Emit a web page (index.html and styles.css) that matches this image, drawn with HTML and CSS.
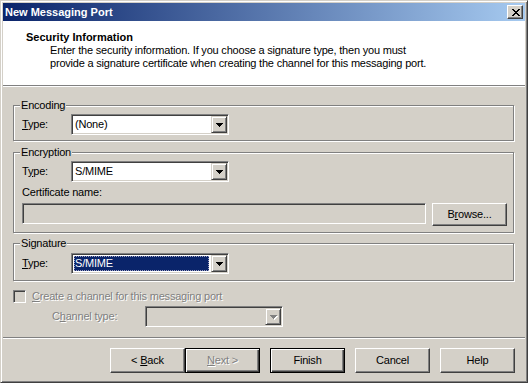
FILE: index.html
```html
<!DOCTYPE html>
<html lang="en">
<head>
    <meta charset="UTF-8">
    <title>New Messaging Port</title>
    <link rel="stylesheet" href="styles.css">
</head>
<body>
    <div class="window">
        <div class="titlebar">
            <span class="title">New Messaging Port</span>
            <span class="close-btn">
                <svg width="8" height="7" viewBox="0 0 8 7" shape-rendering="crispEdges"><path fill="#000" d="M0 0h2v1H0zM6 0h2v1H6zM1 1h2v1H1zM5 1h2v1H5zM2 2h4v1H2zM3 3h2v1H3zM2 4h4v1H2zM1 5h2v1H1zM5 5h2v1H5zM0 6h2v1H0zM6 6h2v1H6z"/></svg>
            </span>
        </div>

        <div class="header">
            <div class="header-title">Security Information</div>
            <div class="header-text">Enter the security information. If you choose a signature type, then you must<br>provide a signature certificate when creating the channel for this messaging port.</div>
        </div>

        <div class="page">
            <div class="group group-encoding">
                <span class="group-label">Encoding</span>
                <div class="field-row">
                    <span class="field-label"><u>T</u>ype:</span>
                    <div class="combo">
                        <span class="combo-value">(None)</span>
                        <span class="combo-btn"><svg width="7" height="4" viewBox="0 0 7 4" shape-rendering="crispEdges"><path fill="#000" d="M0 0h7v1H0zM1 1h5v1H1zM2 2h3v1H2zM3 3h1v1H3z"/></svg></span>
                    </div>
                </div>
            </div>

            <div class="group group-encryption">
                <span class="group-label">Encryption</span>
                <div class="field-row">
                    <span class="field-label">T<u>y</u>pe:</span>
                    <div class="combo">
                        <span class="combo-value">S/MIME</span>
                        <span class="combo-btn"><svg width="7" height="4" viewBox="0 0 7 4" shape-rendering="crispEdges"><path fill="#000" d="M0 0h7v1H0zM1 1h5v1H1zM2 2h3v1H2zM3 3h1v1H3z"/></svg></span>
                    </div>
                </div>
                <div class="cert-label">Certificate name:</div>
                <div class="cert-row">
                    <div class="textbox disabled"></div>
                    <button class="btn browse-btn">B<u>r</u>owse...</button>
                </div>
            </div>

            <div class="group group-signature">
                <span class="group-label">Signature</span>
                <div class="field-row">
                    <span class="field-label"><u>T</u>ype:</span>
                    <div class="combo">
                        <span class="combo-value selected">S/MIME</span>
                        <span class="combo-btn"><svg width="7" height="4" viewBox="0 0 7 4" shape-rendering="crispEdges"><path fill="#000" d="M0 0h7v1H0zM1 1h5v1H1zM2 2h3v1H2zM3 3h1v1H3z"/></svg></span>
                    </div>
                </div>
            </div>

            <div class="check-row">
                <span class="checkbox"></span>
                <span class="disabled-text"><u>C</u>reate a channel for this messaging port</span>
            </div>

            <div class="channel-row">
                <span class="channel-label disabled-text">C<u>h</u>annel type:</span>
                <div class="combo combo-disabled">
                    <span class="combo-value"></span>
                    <span class="combo-btn"><svg width="8" height="5" viewBox="0 0 8 5" shape-rendering="crispEdges"><path fill="#fff" d="M1 1h7v1H1zM2 2h5v1H2zM3 3h3v1H3zM4 4h1v1H4z"/><path fill="#808080" d="M0 0h7v1H0zM1 1h5v1H1zM2 2h3v1H2zM3 3h1v1H3z"/></svg></span>
                </div>
            </div>
        </div>

        <div class="footer">
            <button class="btn"><span>&lt; <u>B</u>ack</span></button>
            <button class="btn btn-default btn-next"><span class="disabled-text"><u>N</u>ext &gt;</span></button>
            <button class="btn btn-default btn-finish">Finish</button>
            <button class="btn btn-cancel">Cancel</button>
            <button class="btn">Help</button>
        </div>
    </div>
</body>
</html>
```

FILE: styles.css
```css
* {
    margin: 0;
    padding: 0;
    box-sizing: border-box;
}

body {
    font-family: "Liberation Sans", Arial, sans-serif;
    font-size: 11px;
    line-height: 13px;
    color: #000;
    background: #d4d0c8;
    width: 528px;
    height: 383px;
    overflow: hidden;
}

u {
    text-decoration: underline;
    text-underline-offset: 1px;
}

.window {
    width: 528px;
    height: 383px;
    background: #d4d0c8;
    border: 1px solid;
    border-color: #d4d0c8 #404040 #404040 #d4d0c8;
    box-shadow: inset 1px 1px #fff, inset -1px -1px #808080;
    padding: 2px;
    display: flex;
    flex-direction: column;
}

/* title bar */
.titlebar {
    height: 18px;
    flex-shrink: 0;
    display: flex;
    align-items: center;
    justify-content: space-between;
    padding: 0 2px;
    background: linear-gradient(to right, #0a246a, #a6caf0);
}

.title {
    color: #fff;
    font-weight: bold;
    white-space: nowrap;
}

.close-btn {
    width: 16px;
    height: 14px;
    display: flex;
    align-items: center;
    justify-content: center;
    padding-left: 1px;
    background: #d4d0c8;
    border: 1px solid;
    border-color: #fff #404040 #404040 #fff;
    box-shadow: inset -1px -1px #808080;
}

/* white header */
.header {
    height: 65px;
    flex-shrink: 0;
    background: #fff;
    border-bottom: 1px solid #808080;
    padding: 10px 0 0 23px;
    white-space: nowrap;
}

.header-title {
    font-weight: bold;
}

.header-text {
    padding-left: 24px;
    letter-spacing: -0.2px;
}

/* page body */
.page {
    border-top: 1px solid #fff;
    padding: 18px 11px 0 10px;
    letter-spacing: -0.2px;
    white-space: nowrap;
}

.group {
    position: relative;
    border: 1px solid #808080;
    box-shadow: inset 1px 1px #fff, 1px 1px #fff;
    padding: 8px 6px 5px 8px;
}

.group-encryption {
    margin-top: 11px;
    padding-bottom: 6px;
}

.group-signature {
    margin-top: 10px;
    padding-top: 9px;
    padding-bottom: 6px;
}

.group-label {
    position: absolute;
    top: -7px;
    left: 6px;
    padding: 0 1px;
    background: #d4d0c8;
}

.field-row {
    display: flex;
    align-items: center;
}

.field-label {
    width: 49px;
}

/* combo box */
.combo {
    width: 158px;
    height: 21px;
    display: flex;
    background: #fff;
    border: 1px solid;
    border-color: #808080 #fff #fff #808080;
    box-shadow: inset 1px 1px #404040, inset -1px -1px #d4d0c8;
    padding: 1px;
}

.combo-value {
    flex: 1;
    padding-left: 2px;
    line-height: 17px;
}

.combo-value.selected {
    margin: 1px 2px 1px 1px;
    padding-left: 0;
    line-height: 13px;
    background: #0a246a;
    color: #fff;
    border: 1px dotted #a0a0c0;
}

.combo-btn {
    width: 16px;
    height: 17px;
    display: flex;
    align-items: center;
    justify-content: center;
    background: #d4d0c8;
    border: 1px solid;
    border-color: #d4d0c8 #404040 #404040 #d4d0c8;
    box-shadow: inset 1px 1px #fff, inset -1px -1px #808080;
}

.combo-disabled {
    width: 138px;
    background: #d4d0c8;
}

.combo-disabled .combo-btn {
    padding: 1px 0 0 1px;
}

.cert-label {
    margin: 4px 0;
}

.cert-row {
    display: flex;
    gap: 6px;
}

.textbox {
    flex: 1;
    height: 21px;
    border: 1px solid;
    border-color: #808080 #fff #fff #808080;
    box-shadow: inset 1px 1px #404040, inset -1px -1px #d4d0c8;
}

.textbox.disabled {
    background: #d4d0c8;
}

/* buttons */
.btn {
    width: 75px;
    height: 23px;
    font: inherit;
    letter-spacing: -0.2px;
    color: #000;
    background: #d4d0c8;
    border: 1px solid;
    border-color: #fff #404040 #404040 #fff;
    box-shadow: inset -1px -1px #808080, inset 1px 1px #d4d0c8;
}

.browse-btn {
    flex-shrink: 0;
}

.btn-default {
    border: 1px solid #000;
    box-shadow: inset 1px 1px #fff, inset -1px -1px #404040, inset -2px -2px #808080;
}

.disabled-text {
    color: #808080;
    text-shadow: 1px 1px #fff;
}

/* bottom area */
.check-row {
    display: flex;
    align-items: center;
    gap: 6px;
    margin-top: 9px;
    height: 13px;
}

.checkbox {
    width: 13px;
    height: 13px;
    background: #d4d0c8;
    border: 1px solid;
    border-color: #808080 #fff #fff #808080;
    box-shadow: inset 1px 1px #404040, inset -1px -1px #d4d0c8;
}

.channel-row {
    display: flex;
    align-items: center;
    margin-top: 3px;
    padding-left: 39px;
}

.channel-label {
    width: 93px;
}

.footer {
    margin-top: 10px;
    border-top: 1px solid #808080;
    box-shadow: inset 0 1px #fff;
    padding: 10px 10px 0 0;
    display: flex;
    justify-content: flex-end;
    gap: 10px;
}

.footer .btn {
    height: 25px;
}

.btn-next {
    margin-left: -10px;
}
```
